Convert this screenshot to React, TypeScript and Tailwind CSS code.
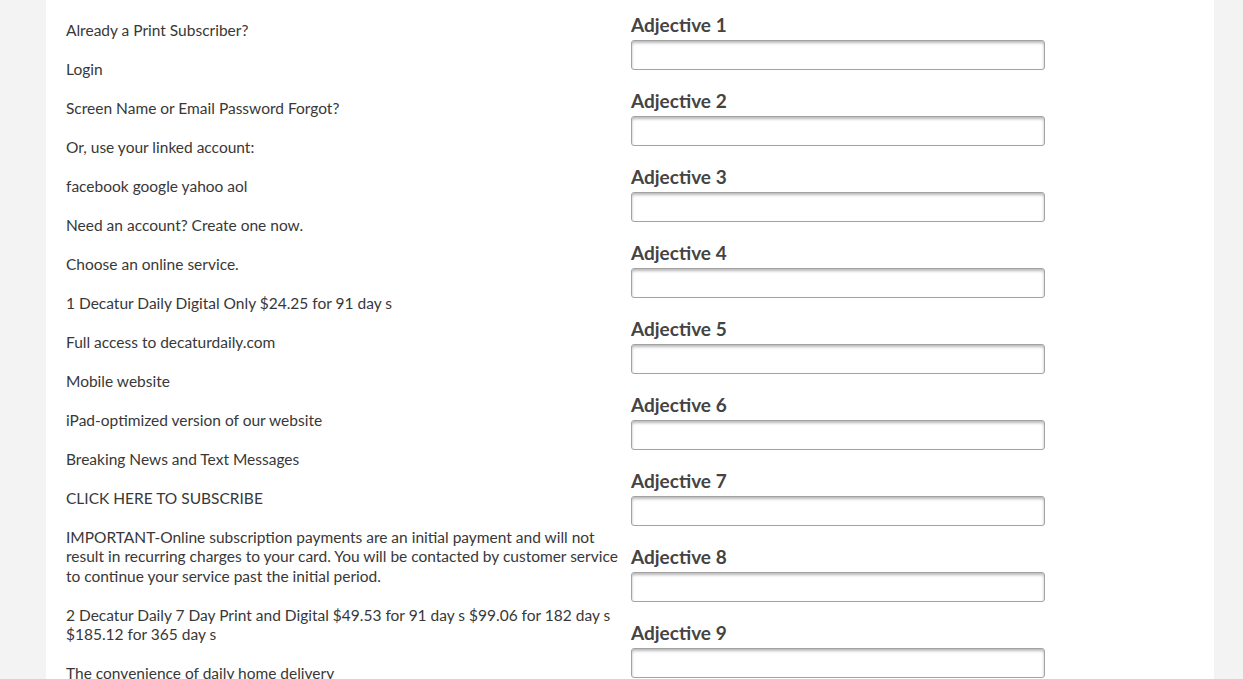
import React from 'react';

const leftItems: string[] = [
  'Already a Print Subscriber?',
  'Login',
  'Screen Name or Email Password Forgot?',
  'Or, use your linked account:',
  'facebook google yahoo aol',
  'Need an account? Create one now.',
  'Choose an online service.',
  '1 Decatur Daily Digital Only $24.25 for 91 day s',
  'Full access to decaturdaily.com',
  'Mobile website',
  'iPad-optimized version of our website',
  'Breaking News and Text Messages',
  'CLICK HERE TO SUBSCRIBE',
  'IMPORTANT-Online subscription payments are an initial payment and will not result in recurring charges to your card. You will be contacted by customer service to continue your service past the initial period.',
  '2 Decatur Daily 7 Day Print and Digital $49.53 for 91 day s $99.06 for 182 day s $185.12 for 365 day s',
  'The convenience of daily home delivery',
];

export default function App() {
  return (
    <div className="min-h-screen h-[679px] overflow-hidden bg-[#f3f3f3] font-['Lato','Liberation_Sans',sans-serif]">
      <div className="ml-[46px] w-[1168px] h-full bg-white px-5 flex">
        <div className="w-[560px] pt-[20.5px] text-[15.5px] leading-[19.5px] text-[#383838]">
          {leftItems.map((t, i) => (
            <p key={i} className="mb-[19.5px]">
              {t}
            </p>
          ))}
        </div>
        <div className="ml-[5px] pt-[14px]">
          {[1, 2, 3, 4, 5, 6, 7, 8, 9].map((n) => (
            <div key={n} className="mb-[20px]">
              <label className="block text-[19px] leading-[22px] font-bold text-[#444] mb-[4px]">
                Adjective {n}
              </label>
              <input
                type="text"
                className="block w-[414px] h-[30px] bg-white border border-[#a3a3a3] rounded-[3px] shadow-[inset_0_2px_3px_rgba(0,0,0,0.28)] outline-none"
              />
            </div>
          ))}
        </div>
      </div>
    </div>
  );
}
